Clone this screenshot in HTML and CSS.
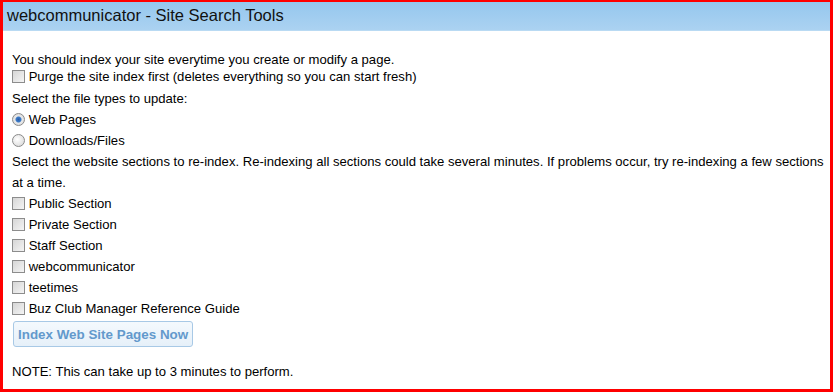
FILE: index.html
```html
<!DOCTYPE html>
<html lang="en">
<head>
  <meta charset="UTF-8">
  <title>Site Search Tools</title>
  <link rel="stylesheet" href="styles.css">
</head>
<body>

<div class="frame">
  <div class="title-bar">webcommunicator - Site Search Tools</div>
  <form class="content">
    <div class="row intro">You should index your site everytime you create or modify a page.</div>
    <label class="row intro"><input type="checkbox"> Purge the site index first (deletes everything so you can start fresh)</label>
    <div class="row spaced">Select the file types to update:</div>
    <label class="row"><input type="radio" name="ftype" checked> Web Pages</label>
    <label class="row"><input type="radio" name="ftype"> Downloads/Files</label>
    <div class="row">Select the website sections to re-index. Re-indexing all sections could take several minutes. If problems occur, try re-indexing a few sections at a time.</div>
    <label class="row"><input type="checkbox"> Public Section</label>
    <label class="row"><input type="checkbox"> Private Section</label>
    <label class="row"><input type="checkbox"> Staff Section</label>
    <label class="row"><input type="checkbox"> webcommunicator</label>
    <label class="row"><input type="checkbox"> teetimes</label>
    <label class="row"><input type="checkbox"> Buz Club Manager Reference Guide</label>
    <button type="button" class="index-btn">Index Web Site Pages Now</button>
    <div class="row note">NOTE: This can take up to 3 minutes to perform.</div>
  </form>
</div>

</body>
</html>
```

FILE: styles.css
```css
* {
  box-sizing: border-box;
}

body {
  margin: 0;
  font-family: "Liberation Sans", Arial, sans-serif;
  color: #000;
  background: #fff;
}

.frame {
  width: 833px;
  height: 392px;
  border: 3px solid #f00;
  border-top-width: 2px;
  overflow: hidden;
}

.title-bar {
  height: 29px;
  line-height: 27px;
  padding-left: 4px;
  font-size: 16.5px;
  color: #111;
  background: linear-gradient(#95c7ee, #abd2f1);
  border-bottom: 1px solid #b9daf3;
}

.content {
  padding: 20px 2px 0 9px;
  font-size: 13.1px;
  margin: 0;
}

.row {
  display: block;
  line-height: 21px;
}

.row.intro {
  line-height: 17px;
}

.row.spaced {
  margin-top: 3px;
}

.row input {
  appearance: none;
  -webkit-appearance: none;
  width: 13px;
  height: 13px;
  margin: 0;
  vertical-align: -2px;
  border: 1px solid #8c8c8c;
  background: linear-gradient(135deg, #d6d6d6, #f4f4f4);
}

.row input[type="radio"] {
  border-radius: 50%;
  border-color: #8a8a8a;
  background: radial-gradient(circle at 40% 40%, #fff, #d4d4d4);
}

.row input[type="radio"]:checked {
  background: radial-gradient(circle, #2a5da8 0, #3d7cc9 2.5px, #e8e8e8 3.5px, #d6d6d6 100%);
}

.index-btn {
  display: block;
  margin: 2px 0 0 1px;
  height: 26px;
  padding: 0 4px;
  font-family: "Liberation Sans", Arial, sans-serif;
  font-size: 13.4px;
  font-weight: bold;
  color: #6399cc;
  background: linear-gradient(#f4f9fd, #e6f0f9);
  border: 1px solid #a8c9e6;
  border-radius: 3px;
}

.note {
  margin-top: 14px;
}
```
